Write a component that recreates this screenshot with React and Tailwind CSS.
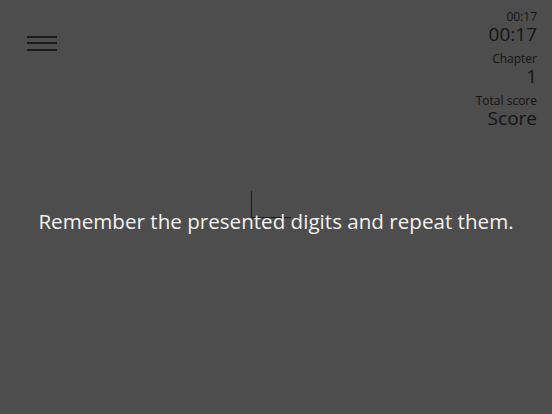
// Digit span task screen: menu, timer/chapter/score panel and instruction
const Stat = ({ label, value }) => (
  <div className="flex flex-col items-end">
    <span className="text-[12px] leading-[14px]">{label}</span>
    <span className="text-[19px] leading-[20px]">{value}</span>
  </div>
);

const App = () => {
  return (
    <div
      className="relative w-[552px] h-[414px] overflow-hidden bg-[#4d4d4d] text-[#141414]"
      style={{ fontFamily: '"Open Sans", "Noto Sans", sans-serif' }}
    >
      {/* Top bar */}
      <div className="flex justify-between">
        <button className="ml-[27px] mt-[36px] flex flex-col gap-[4.3px] w-[30px]">
          <span className="h-[2px] w-full bg-[#1a1a1a]" />
          <span className="h-[2px] w-full bg-[#1a1a1a]" />
          <span className="h-[2px] w-full bg-[#1a1a1a]" />
        </button>
        <div className="mr-[15px] mt-[10px] flex flex-col items-end gap-[8px]">
          <Stat label="00:17" value="00:17" />
          <Stat label="Chapter" value="1" />
          <Stat label="Total score" value="Score" />
        </div>
      </div>

      {/* Fixation cross (behind the text) */}
      <div className="absolute left-[251px] top-[191px] w-px h-[27px] bg-[#1a1a1a]" />
      <div className="absolute left-[251px] top-[217px] w-[40px] h-px bg-[#1a1a1a]" />

      {/* Instruction */}
      <div className="absolute inset-x-0 top-[206px] flex justify-center">
        <p className="text-[20.6px] leading-[30px] text-[#f2f2f2]">
          Remember the presented digits and repeat them.
        </p>
      </div>
    </div>
  );
};

export default App;
